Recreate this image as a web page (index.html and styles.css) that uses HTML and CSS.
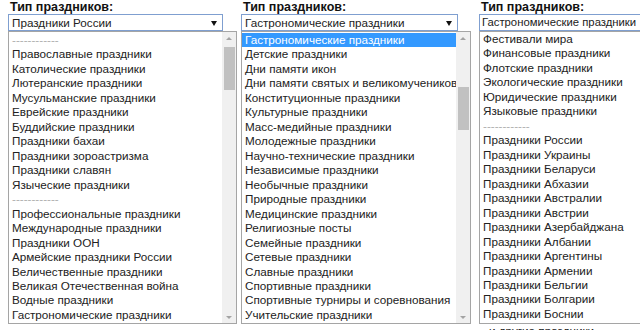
FILE: index.html
```html
<!DOCTYPE html>
<html lang="ru">
<head>
<meta charset="utf-8">
<link rel="stylesheet" href="styles.css">
</head>
<body>
<div class="page">
  <div class="col col1">
    <div class="label">Тип праздников:</div>
    <div class="select s1"><span class="val">Праздники России</span><span class="arrow"></span></div>
    <div class="list l1">
      <ul class="opts">
        <li class="sep">------------</li>
        <li>Православные праздники</li>
        <li>Католические праздники</li>
        <li>Лютеранские праздники</li>
        <li>Мусульманские праздники</li>
        <li>Еврейские праздники</li>
        <li>Буддийские праздники</li>
        <li>Праздники бахаи</li>
        <li>Праздники зороастризма</li>
        <li>Праздники славян</li>
        <li>Языческие праздники</li>
        <li class="sep">------------</li>
        <li>Профессиональные праздники</li>
        <li>Международные праздники</li>
        <li>Праздники ООН</li>
        <li>Армейские праздники России</li>
        <li>Величественные праздники</li>
        <li>Великая Отечественная война</li>
        <li>Водные праздники</li>
        <li>Гастрономические праздники</li>
      </ul>
      <div class="scroll">
        <span class="up"></span>
        <div class="track t1"><span class="thumb"></span></div>
        <span class="down"></span>
      </div>
    </div>
  </div>
  <div class="col col2">
    <div class="label">Тип праздников:</div>
    <div class="select s2"><span class="val">Гастрономические праздники</span><span class="arrow"></span></div>
    <div class="list l2">
      <ul class="opts">
        <li class="sel">Гастрономические праздники</li>
        <li>Детские праздники</li>
        <li>Дни памяти икон</li>
        <li>Дни памяти святых и великомучеников</li>
        <li>Конституционные праздники</li>
        <li>Культурные праздники</li>
        <li>Масс-медийные праздники</li>
        <li>Молодежные праздники</li>
        <li>Научно-технические праздники</li>
        <li>Независимые праздники</li>
        <li>Необычные праздники</li>
        <li>Природные праздники</li>
        <li>Медицинские праздники</li>
        <li>Религиозные посты</li>
        <li>Семейные праздники</li>
        <li>Сетевые праздники</li>
        <li>Славные праздники</li>
        <li>Спортивные праздники</li>
        <li>Спортивные турниры и соревнования</li>
        <li>Учительские праздники</li>
      </ul>
      <div class="scroll">
        <span class="up"></span>
        <div class="track t2"><span class="thumb"></span></div>
        <span class="down"></span>
      </div>
    </div>
  </div>
  <div class="col col3">
    <div class="label">Тип праздников:</div>
    <div class="select s3"><span class="val">Гастрономические праздники</span></div>
    <div class="list l3">
      <ul class="opts">
        <li>Фестивали мира</li>
        <li>Финансовые праздники</li>
        <li>Флотские праздники</li>
        <li>Экологические праздники</li>
        <li>Юридические праздники</li>
        <li>Языковые праздники</li>
        <li class="sep">------------</li>
        <li>Праздники России</li>
        <li>Праздники Украины</li>
        <li>Праздники Беларуси</li>
        <li>Праздники Абхазии</li>
        <li>Праздники Австралии</li>
        <li>Праздники Австрии</li>
        <li>Праздники Азербайджана</li>
        <li>Праздники Албании</li>
        <li>Праздники Аргентины</li>
        <li>Праздники Армении</li>
        <li>Праздники Бельгии</li>
        <li>Праздники Болгарии</li>
        <li>Праздники Боснии</li>
      </ul>
    </div>
    <div class="after">и другие праздники</div>
  </div>
</div>
</body>
</html>
```

FILE: styles.css
```css
html, body {
  margin: 0;
  padding: 0;
  background: #ffffff;
  overflow: hidden;
}
body {
  width: 640px;
  height: 330px;
  font-family: "Liberation Sans", Arial, sans-serif;
  font-size: 11.7px;
  color: #222222;
}
.page {
  display: flex;
  padding-left: 8px;
  width: 632px;
  overflow: hidden;
}
.col {
  display: flex;
  flex-direction: column;
  flex: none;
}
.col1 { width: 233px; }
.col2 { width: 238px; }
.col3 { width: 200px; }
.label {
  font-weight: bold;
  font-size: 12.5px;
  line-height: 15px;
  height: 14px;
  padding-left: 2px;
  color: #111111;
}
.select {
  height: 15px;
  border: 1px solid #7f9fd0;
  display: flex;
  align-items: center;
  padding: 0 5px 0 3px;
  line-height: 15px;
  font-size: 11.7px;
  color: #222222;
  white-space: nowrap;
  overflow: hidden;
  justify-content: space-between;
}
.s1 { width: 205px; }
.s2 { width: 207px; }
.s3 { width: 190px; font-size: 11.3px; padding-left: 2px; }
.arrow {
  width: 0;
  height: 0;
  border-left: 3px solid transparent;
  border-right: 3px solid transparent;
  border-top: 5px solid #111111;
  margin-top: 1px;
}
.list {
  display: flex;
  border: 1px solid #a5a5a5;
  height: 291px;
  background: #ffffff;
}
.l1 { width: 227px; }
.l2 { width: 228px; }
.l3 { width: 198px; }
.opts {
  list-style: none;
  margin: 0;
  padding: 1px 0 0 0;
  flex: 1;
  overflow: hidden;
}
.opts li {
  height: 14.47px;
  line-height: 14.47px;
  padding-left: 3px;
  white-space: nowrap;
  color: #222222;
}
.l3 .opts li { position: relative; top: -1px; }
.opts li.sep {
  color: #b0b0b0;
}
.opts li.sel {
  background: #3399ff;
  color: #ffffff;
}
.scroll {
  width: 14px;
  flex: none;
  background: #f0f0f0;
  display: flex;
  flex-direction: column;
  align-items: center;
}
.up, .down {
  flex: none;
  height: 12px;
  width: 14px;
  display: flex;
  justify-content: center;
  align-items: center;
}
.up::before {
  content: "";
  border-left: 3px solid transparent;
  border-right: 3px solid transparent;
  border-bottom: 3px solid #a3a3a3;
}
.down::before {
  content: "";
  border-left: 3px solid transparent;
  border-right: 3px solid transparent;
  border-top: 3px solid #a3a3a3;
}
.track {
  flex: 1;
  width: 12px;
  display: flex;
  flex-direction: column;
}
.thumb {
  display: block;
  width: 11px;
  margin-left: 1px;
  background: #c1c1c1;
}
.t1 { padding-top: 3px; }
.t1 .thumb { height: 43px; }
.t2 { padding-top: 43px; }
.t2 .thumb { height: 43px; }
.after {
  padding-left: 10px;
  line-height: 14px;
  color: #222222;
  white-space: nowrap;
  overflow: hidden;
}
```
